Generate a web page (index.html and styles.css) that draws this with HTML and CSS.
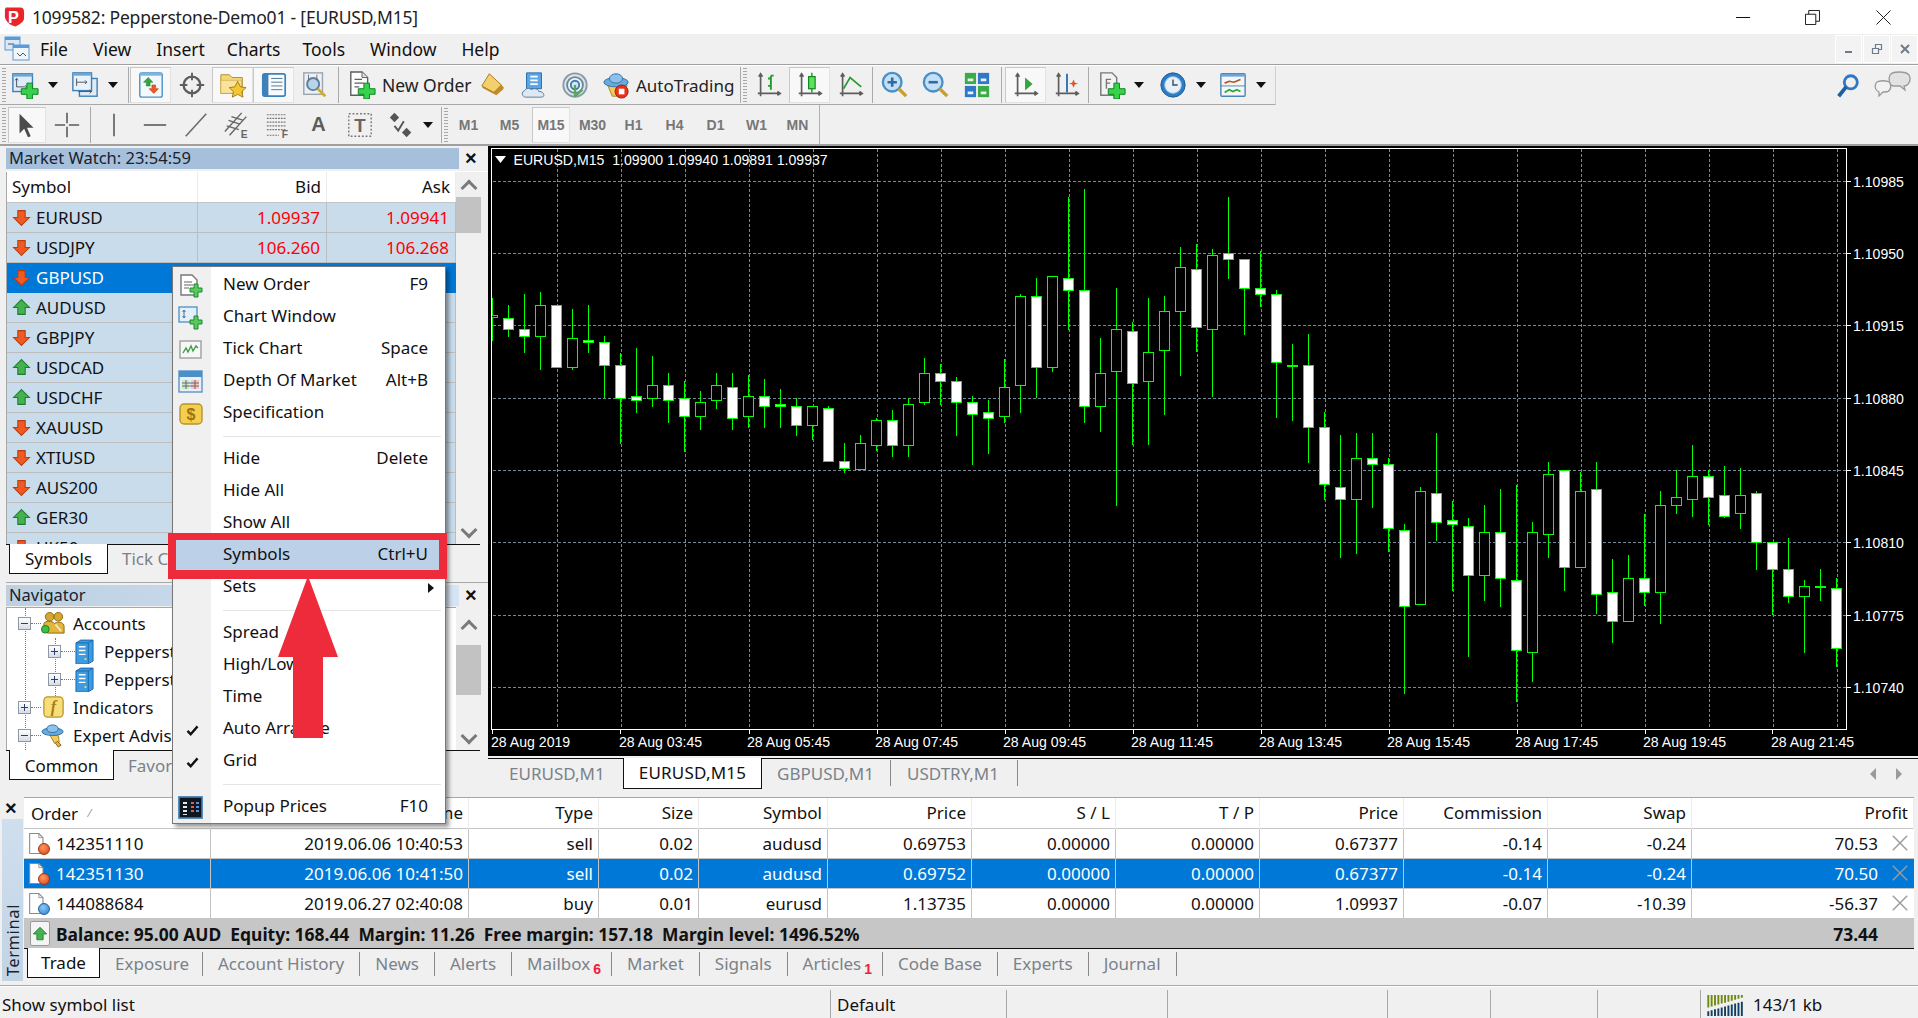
FILE: index.html
```html
<!DOCTYPE html>
<html lang="en">
<head>
<meta charset="utf-8">
<title>1099582: Pepperstone-Demo01 - [EURUSD,M15]</title>
<link rel="stylesheet" href="styles.css">
</head>
<body>
<svg class="sprite" aria-hidden="true"><defs>
<symbol id="plus" viewBox="0 0 30 30"><path d="M17 13h6v6h6v6h-6v5h-6v-5h-6v-6h6z" fill="#35d24a" stroke="#0b7f21"/></symbol>
<symbol id="up" viewBox="0 0 18 18"><path d="M9 1.500 16.500 9H12.500v6.500h-7V9H1.500z" fill="#45b14f" stroke="#1f7d33"/></symbol>
<symbol id="down" viewBox="0 0 18 18"><path d="M9 16.500 16.500 9H12.500V2.500h-7V9H1.500z" fill="#ef5a22" stroke="#b63c12"/></symbol>
<symbol id="newchart" viewBox="0 0 30 30"><rect x="2" y="3" width="21" height="19" fill="#dfecf7" stroke="#3f7fb5" stroke-width="1.500"/><rect x="2" y="3" width="21" height="3" fill="#6ba5d6"/><path d="M6 8v9h9M4.500 10 6 8l1.500 2M15 15.500l2 1.500-2 1.500" stroke="#44525e" fill="none"/><use href="#plus"/></symbol>
<symbol id="profiles" viewBox="0 0 30 30"><rect x="9" y="8" width="19" height="19" fill="#dfecf7" stroke="#3f7fb5" stroke-width="1.500"/><rect x="2" y="2" width="20" height="19" fill="#e9f2fa" stroke="#3f7fb5" stroke-width="1.500"/><rect x="2" y="2" width="20" height="3" fill="#6ba5d6"/><path d="M6 8v8M6 12h11M15 10l2 2-2 2M8 22h14M20 20l2 2-2 2" stroke="#44525e" fill="none"/></symbol>
<symbol id="mw" viewBox="0 0 30 30"><rect x="3" y="2" width="24" height="26" rx="2" fill="#f3f8fc" stroke="#4a90c8" stroke-width="1.500"/><rect x="3" y="2" width="24" height="3" fill="#7eb3dd"/><path d="M12 7l5 5h-3v4h-4v-4H7z" fill="#2fa83e" stroke="#1c7c2c" stroke-width=".6"/><path d="M18 24l5-5h-3v-4h-4v4h-3z" fill="#ef5a22" stroke="#b63c12" stroke-width=".6"/></symbol>
<symbol id="target" viewBox="0 0 30 30"><circle cx="15" cy="15" r="9" fill="none" stroke="#5d5d5d" stroke-width="2.500"/><path d="M15 2v8M15 20v8M2 15h8M20 15h8" stroke="#5d5d5d" stroke-width="2"/></symbol>
<symbol id="navstar" viewBox="0 0 30 30"><path d="M2 4h9l3 3h11v17H2z" fill="#f5d778" stroke="#b08a2e"/><path d="M2 10h22v14H2z" fill="#f9e39a" stroke="#c39f3d" stroke-width=".6"/><path d="M20 11l3 6 6 .8-4.500 4.200 1.200 6-5.700-3-5.700 3 1.200-6L11 17.800l6-.8z" fill="#f4c630" stroke="#9a7a1b"/></symbol>
<symbol id="term" viewBox="0 0 30 30"><rect x="3" y="3" width="24" height="24" rx="2" fill="#f7fbfe" stroke="#3b82bd" stroke-width="1.800"/><rect x="3" y="3" width="6" height="24" fill="#3b82bd"/><path d="M12 8h12M12 12h12M12 16h12M12 20h12" stroke="#52708c"/><path d="M6 8v1M6 12v1M6 16v1" stroke="#f0503a" stroke-width="1.500"/></symbol>
<symbol id="tester" viewBox="0 0 30 30"><rect x="3" y="2" width="20" height="23" fill="#edf1f5" stroke="#9aa5ae" stroke-width="1.500"/><circle cx="13" cy="14" r="6.500" fill="#b8d3e8" stroke="#5b7f9c" stroke-width="2"/><path d="M18 19l8 8" stroke="#d3a92e" stroke-width="3"/><path d="M8 4v6M17 4v6" stroke="#667"/></symbol>
<symbol id="doc" viewBox="0 0 30 30"><path d="M3 1h12l6 6v19H3z" fill="#fff" stroke="#5f5f5f" stroke-width="1.500"/><path d="M7 9h8M7 13h10M7 17h5" stroke="#5f5f5f" stroke-width="1.500"/><path d="M15 1v6h6" fill="#ddd" stroke="#5f5f5f"/><use href="#plus"/></symbol>
<symbol id="book" viewBox="0 0 30 30"><path d="M11 3 26 17c1 1 .5 2-.5 3l-7 6-15-8z" fill="#c18a2a"/><path d="M11 3 24 15l-8 8-13-7z" fill="#f3cf6d" stroke="#a87a22"/></symbol>
<symbol id="cloud" viewBox="0 0 30 30"><path d="M7 2h16v17H7z" fill="#5ba6e6" stroke="#2169ae"/><path d="M11 6h8M11 10h8M11 14h8" stroke="#fff" stroke-width="2"/><path d="M6 28c-4 0-5-6-1-7 1-3 6-3 7-1 3-2 8-1 8 2 5-1 8 6 3 6z" fill="#dfe8f2" stroke="#56789b"/></symbol>
<symbol id="signal" viewBox="0 0 30 30"><circle cx="15" cy="15" r="12.500" fill="#dde5ea" stroke="#8a9aa5" stroke-width="2"/><circle cx="15" cy="15" r="8.500" fill="#f1f5f7" stroke="#6b87a0" stroke-width="2"/><circle cx="15" cy="15" r="4.500" fill="#d7e4ec" stroke="#3a7ea8" stroke-width="2"/><path d="M15 15v13M15 27l8-7" stroke="#58a65a" stroke-width="2.500"/></symbol>
<symbol id="auto" viewBox="0 0 30 30"><path d="M6 15l5 12h12l4-12z" fill="#f2cb58" stroke="#a3802b"/><ellipse cx="15" cy="12" rx="13" ry="5" fill="#6aa9dc" stroke="#2f6fa8"/><ellipse cx="15" cy="8" rx="7" ry="5" fill="#8bc1ea" stroke="#2f6fa8"/><circle cx="21" cy="22" r="7" fill="#e8331f" stroke="#9a1d10"/><rect x="18" y="19" width="6" height="6" fill="#fff"/></symbol>
<symbol id="axes" viewBox="0 0 30 30"><path d="M6 3v24M3 24h24M4 6l2-3 2 3M24 22l3 2-3 2" stroke="#5d5d5d" stroke-width="1.800" fill="none"/></symbol>
<symbol id="bars" viewBox="0 0 30 30"><use href="#axes"/><path d="M17 5v15M14 8h3M17 16h-3M20 5h-3" stroke="#1f9a2b" stroke-width="2" fill="none"/></symbol>
<symbol id="candle" viewBox="0 0 30 30"><use href="#axes"/><path d="M17 2v21" stroke="#109a22" stroke-width="1.500"/><rect x="13.500" y="6" width="7" height="13" fill="#5fe05c" stroke="#0f8a20" stroke-width="1.300"/></symbol>
<symbol id="lineic" viewBox="0 0 30 30"><use href="#axes"/><path d="M7 19 14 7l12 10" stroke="#2a9a35" stroke-width="1.800" fill="none"/></symbol>
<symbol id="zin" viewBox="0 0 30 30"><circle cx="12" cy="12" r="10" fill="#c5e0f5" stroke="#4a8fc7" stroke-width="2.500"/><path d="M7 12h10M12 7v10" stroke="#2b6ea6" stroke-width="2.800"/><path d="M19 19l8 8" stroke="#c99f2c" stroke-width="3.500"/></symbol>
<symbol id="zout" viewBox="0 0 30 30"><circle cx="12" cy="12" r="10" fill="#c5e0f5" stroke="#4a8fc7" stroke-width="2.500"/><path d="M7 12h10" stroke="#2b6ea6" stroke-width="2.800"/><path d="M19 19l8 8" stroke="#c99f2c" stroke-width="3.500"/></symbol>
<symbol id="tile" viewBox="0 0 30 30"><rect x="2" y="2" width="12" height="12" fill="#3bab45"/><rect x="16" y="2" width="12" height="12" fill="#2d78c8"/><rect x="2" y="16" width="12" height="12" fill="#2d78c8"/><rect x="16" y="16" width="12" height="12" fill="#3bab45"/><path d="M5 8h6v3H5zM19 8h6v3h-6zM5 22h6v3H5zM19 22h6v3h-6z" fill="#e8f0f5"/></symbol>
<symbol id="scrollic" viewBox="0 0 30 30"><use href="#axes"/><path d="M14 7l8 7-8 7z" fill="#32a53c"/></symbol>
<symbol id="shiftic" viewBox="0 0 30 30"><use href="#axes"/><path d="M15 3v20" stroke="#2a6fb0" stroke-width="2"/><path d="M22 9l1.500 3.500 3.500 1-3.500 1L22 18l-1.500-3.500-3.500-1 3.500-1z" fill="#e0562a"/></symbol>
<symbol id="indic" viewBox="0 0 30 30"><path d="M3 2h12l5 5v19H3z" fill="#f3f3f3" stroke="#777" stroke-width="1.500"/><path d="M9 19V9h5M9 13h4" stroke="#777" stroke-width="1.500" fill="none"/><use href="#plus"/></symbol>
<symbol id="clock" viewBox="0 0 30 30"><circle cx="15" cy="15" r="13" fill="#2b7dc8" stroke="#1b578f"/><circle cx="15" cy="15" r="9" fill="#e6f0f8" stroke="#8fb6d8"/><path d="M15 9v6h5" stroke="#3b4c5c" stroke-width="1.500" fill="none"/></symbol>
<symbol id="tmpl" viewBox="0 0 30 30"><rect x="2" y="3" width="26" height="24" rx="1" fill="#f3f7fa" stroke="#4a84b3" stroke-width="1.500"/><rect x="2" y="3" width="26" height="3" fill="#6ba5d6"/><path d="M2 16h26" stroke="#4a84b3"/><path d="M6 13l5-2 5 1 7-3" stroke="#b9531e" stroke-width="1.800" fill="none"/><path d="M6 23l5-3 4 2 4-2 4 2" stroke="#32a53c" stroke-width="1.800" fill="none"/></symbol>
<symbol id="finder" viewBox="0 0 30 30"><circle cx="18" cy="11" r="7" fill="none" stroke="#2f78c4" stroke-width="3"/><path d="M13 16 5 26" stroke="#1f5ea3" stroke-width="4"/></symbol>
<symbol id="chat" viewBox="0 0 40 30"><path d="M18 4c2-4 16-4 19 0 3 5-1 11-5 11l1 4-5-4H22c-5 0-6-7-4-11z" fill="#e2e2e2" stroke="#9a9a9a" stroke-width="1.300"/><path d="M4 12c2-3 12-3 14 0 2 5 0 9-5 9H11l-4 4v-4c-3-1-5-5-3-9z" fill="#f2f2f2" stroke="#9a9a9a" stroke-width="1.300"/></symbol>
<symbol id="cursor" viewBox="0 0 30 30"><path d="M7 3v21l5-5 4 9 3-1-4-9h7z" fill="#4b4b4b"/></symbol>
<symbol id="xhair" viewBox="0 0 30 30"><path d="M15 2v11M15 17v11M2 15h11M17 15h11" stroke="#5a5a5a" stroke-width="1.700"/></symbol>
<symbol id="vline" viewBox="0 0 30 30"><path d="M15 3v24" stroke="#5a5a5a" stroke-width="1.700"/></symbol>
<symbol id="hline" viewBox="0 0 30 30"><path d="M3 15h24" stroke="#5a5a5a" stroke-width="1.700"/></symbol>
<symbol id="trend" viewBox="0 0 30 30"><path d="M4 27 26 3" stroke="#6a6a6a" stroke-width="1.700"/></symbol>
<symbol id="channel" viewBox="0 0 30 30"><path d="M2 22 20 2M7 26 25 6M6 10l12 4M4 16l13 4M9 6l13 4" stroke="#666" stroke-width="1.500" fill="none"/><text x="19" y="29" class="mini">E</text></symbol>
<symbol id="fibo" viewBox="0 0 30 30"><path d="M3 4h21M3 8h21M3 12h21M3 16h21M3 20h21M3 26h13" stroke="#777" stroke-dasharray="2 1" stroke-width="1.300"/><text x="19" y="29" class="mini">F</text></symbol>
<symbol id="textbox" viewBox="0 0 30 30"><rect x="3" y="3" width="24" height="24" fill="none" stroke="#777" stroke-dasharray="2 2" stroke-width="1.500"/><text x="15" y="23" class="tbox">T</text></symbol>
<symbol id="shapes" viewBox="0 0 30 30"><path d="M8 2l5 5-5 5-5-5zM21 18l5 5-5 5-5-5z" fill="#555"/><path d="M8 16l4 5 6-10" stroke="#555" stroke-width="2" fill="none"/></symbol>
<symbol id="ordsmall" viewBox="0 0 26 26"><path d="M3 2h11l5 5v15H3z" fill="#fff" stroke="#777" stroke-width="1.400"/><path d="M6 9h8M6 12h9M6 15h5" stroke="#666" stroke-width="1.200"/><path d="M16 11h4v4h4v4h-4v5h-4v-5h-4v-4h4z" fill="#58c85f" stroke="#1d8a2d"/></symbol>
<symbol id="chartsmall" viewBox="0 0 26 26"><rect x="1" y="2" width="18" height="15" fill="#e3eff9" stroke="#4a8fc7" stroke-width="1.300"/><path d="M6 5v8M4.500 7 6 5l1.500 2M4.500 11 6 13l1.500-2" stroke="#4a6f93" fill="none"/><path d="M16 11h4v4h4v4h-4v5h-4v-5h-4v-4h4z" fill="#58c85f" stroke="#1d8a2d"/></symbol>
<symbol id="ticksmall" viewBox="0 0 26 26"><rect x="2" y="4" width="21" height="17" fill="#f7f7f7" stroke="#999" stroke-width="1.300"/><path d="M5 16l3-5 2 4 3-6 2 5 3-5 2 2" stroke="#3f9e47" stroke-width="1.400" fill="none"/></symbol>
<symbol id="domsmall" viewBox="0 0 26 26"><rect x="1" y="2" width="23" height="21" fill="#e8eff5" stroke="#4a8fc7" stroke-width="1.300"/><rect x="1" y="2" width="23" height="6" fill="#4a8fc7"/><path d="M4 11h7v9H4z" fill="#cfe8c8"/><path d="M13 11h8v9h-8z" fill="#f4c9c2"/><path d="M4 14h17M4 17h17M8 11v9M17 11v9" stroke="#667"/></symbol>
<symbol id="specsmall" viewBox="0 0 26 26"><rect x="2" y="3" width="22" height="20" rx="4" fill="#f4ce4f" stroke="#b8932a" stroke-width="1.400"/><text x="13" y="19" class="dollar">$</text></symbol>
<symbol id="popup" viewBox="0 0 26 26"><rect x="1" y="2" width="23" height="21" fill="#0e1620" stroke="#3c7bb2" stroke-width="1.700"/><path d="M5 7h4v2H5zM5 11h4v2H5zM5 15h4v2H5zM5 19h4v1H5z" fill="#e8e8e8"/><path d="M13 7h3v2h-3zM13 11h3v2h-3zM13 15h3v2h-3z" fill="#e9594f"/><path d="M18 7h3v2h-3zM18 11h3v2h-3zM18 15h3v2h-3z" fill="#5c8fe0"/></symbol>
<symbol id="accounts" viewBox="0 0 26 26"><circle cx="9" cy="6" r="4.500" fill="#d6a72c" stroke="#8a6a17"/><circle cx="18" cy="6" r="4.500" fill="#d6a72c" stroke="#8a6a17"/><path d="M3 21V13c1-3 9-3 11 0l2-1c3-1 8 0 8 4v7H7z" fill="#e3b53a" stroke="#8a6a17"/><circle cx="4.500" cy="19" r="4" fill="#3bc045" stroke="#1c7c2c"/><path d="M15 14l6 7" stroke="#f5e6b4" stroke-width="2"/></symbol>
<symbol id="server" viewBox="0 0 20 26"><path d="M1 4l5-3h13v22l-5 3H1z" fill="#3b9be3" stroke="#1b67ac"/><path d="M14 26V4l5-3M1 4h13" stroke="#1b67ac" fill="none"/><path d="M4 8h7M4 12h7M4 16h7" stroke="#fff" stroke-width="1.500"/><circle cx="11" cy="21" r="1.200" fill="#ffd24d"/></symbol>
<symbol id="indicators" viewBox="0 0 26 26"><rect x="3" y="2" width="20" height="21" rx="4" fill="#f7de78" stroke="#b8932a" stroke-width="1.300"/><text x="13" y="18" class="func">f</text></symbol>
<symbol id="expert" viewBox="0 0 26 26"><path d="M9 12l5 9 5-1-1-7z" fill="#f0cc5a" stroke="#a3802b"/><path d="M17 19l4 4-3 2-3-4z" fill="#e3b53a" stroke="#8a6a17"/><ellipse cx="12" cy="9" rx="11" ry="4" fill="#6aa9dc" stroke="#2f6fa8"/><ellipse cx="12" cy="6" rx="6" ry="4" fill="#8bc1ea" stroke="#2f6fa8"/></symbol>
<symbol id="ticket" viewBox="0 0 24 26"><path d="M2 1h11l5 5v19H2z" fill="#fff" stroke="#8a8a8a" stroke-width="1.300"/><path d="M13 1v5h5" fill="none" stroke="#8a8a8a"/></symbol>
<symbol id="closex" viewBox="0 0 20 20"><path d="M2 2l16 16M18 2 2 18" stroke="#9b9b9b" stroke-width="1.600"/></symbol>
</defs></svg>

<div class="app">
  <header class="titlebar">
    <svg class="logo" viewBox="0 0 24 24"><path d="M3 2h15c3 0 4 2 4 5v6c0 4-5 7-9 9-5-1-10-5-11-10V4z" fill="#e8262a"/><text x="11" y="18" class="logo-p">P</text></svg>
    <span class="window-title">1099582: Pepperstone-Demo01 - [EURUSD,M15]</span>
    <div class="winctl">
      <svg class="wc wc-min" viewBox="0 0 16 16"><path d="M0 8h15" stroke="#111" stroke-width="1.100"/></svg>
      <svg class="wc wc-res" viewBox="0 0 16 16"><path d="M.5 4.500h11v11H.5zM4 4.500V.5h11.500V12H11.500" fill="none" stroke="#111"/></svg>
      <svg class="wc wc-cls" viewBox="0 0 16 16"><path d="M.5.5l15 15M15.500.5l-15 15" stroke="#111"/></svg>
    </div>
  </header>

  <nav class="menubar">
    <svg class="mdi-icon" viewBox="0 0 26 26"><rect x="1" y="1" width="15" height="13" fill="#d8e8f7" stroke="#5b9bd5"/><rect x="1" y="1" width="15" height="3" fill="#5b9bd5"/><rect x="9" y="9" width="16" height="15" fill="#eef5fb" stroke="#5b9bd5"/><rect x="9" y="9" width="16" height="3" fill="#5b9bd5"/><path d="M4 8h6M13 17l3 3 3-3 3 3" stroke="#555" fill="none"/></svg>
    <span class="menu-file">File</span><span class="menu-view">View</span><span class="menu-insert">Insert</span><span class="menu-charts">Charts</span><span class="menu-tools">Tools</span><span class="menu-window">Window</span><span class="menu-help">Help</span>
    <div class="mdi-btns">
      <span class="mdi-btn"><svg viewBox="0 0 12 12"><path d="M2 9h7" stroke="#6b7b8c" stroke-width="2"/></svg></span>
      <span class="mdi-btn"><svg viewBox="0 0 12 12"><path d="M1.500 5.500h6v5h-6zM4.500 5V1.500h6v5H8" fill="none" stroke="#6b7b8c" stroke-width="1.200"/></svg></span>
      <span class="mdi-btn"><svg viewBox="0 0 12 12"><path d="M2 2l8 8M10 2l-8 8" stroke="#6b7b8c" stroke-width="2"/></svg></span>
    </div>
  </nav>

  <div class="toolbar-row">
    <div class="toolbar tb-main">
      <i class="grip"></i>
      <span class="tool w38"><svg class="ic"><use href="#newchart"/></svg></span><span class="caret ml2"></span>
      <span class="tool w38 ml6"><svg class="ic"><use href="#profiles"/></svg></span><span class="caret ml2"></span>
      <i class="sep ml8 mr1"></i>
      <span class="tool on"><svg class="ic"><use href="#mw"/></svg></span>
      <span class="tool"><svg class="ic"><use href="#target"/></svg></span>
      <span class="tool on"><svg class="ic"><use href="#navstar"/></svg></span>
      <span class="tool on"><svg class="ic"><use href="#term"/></svg></span>
      <span class="tool"><svg class="ic"><use href="#tester"/></svg></span>
      <i class="sep ml3"></i>
      <span class="tool-text order-btn"><svg class="ic"><use href="#doc"/></svg><span>New Order</span></span>
      <span class="tool"><svg class="ic"><use href="#book"/></svg></span>
      <span class="tool"><svg class="ic"><use href="#cloud"/></svg></span>
      <span class="tool"><svg class="ic"><use href="#signal"/></svg></span>
      <span class="tool-text auto-btn"><svg class="ic"><use href="#auto"/></svg><span>AutoTrading</span></span>
      <i class="sep ml2"></i>
      <i class="grip ml2"></i>
      <span class="tool ml1"><svg class="ic"><use href="#bars"/></svg></span>
      <span class="tool on"><svg class="ic"><use href="#candle"/></svg></span>
      <span class="tool"><svg class="ic"><use href="#lineic"/></svg></span>
      <i class="sep ml1 mr1"></i>
      <span class="tool"><svg class="ic"><use href="#zin"/></svg></span>
      <span class="tool"><svg class="ic"><use href="#zout"/></svg></span>
      <span class="tool"><svg class="ic"><use href="#tile"/></svg></span>
      <i class="sep ml4 mr3"></i>
      <span class="tool on"><svg class="ic"><use href="#scrollic"/></svg></span>
      <span class="tool"><svg class="ic"><use href="#shiftic"/></svg></span>
      <i class="sep ml1 mr2"></i>
      <span class="tool"><svg class="ic"><use href="#indic"/></svg></span><span class="caret"></span>
      <span class="tool ml6"><svg class="ic"><use href="#clock"/></svg></span><span class="caret ml1"></span>
      <span class="tool ml4"><svg class="ic"><use href="#tmpl"/></svg></span><span class="caret ml1"></span>
    </div>
    <div class="tb-right">
      <svg class="ic"><use href="#finder"/></svg>
      <svg class="ic-chat"><use href="#chat"/></svg>
    </div>
  </div>

  <div class="toolbar-row tb2-row">
    <div class="toolbar tb-draw">
      <i class="grip"></i>
      <span class="tool w38 on ml2"><svg class="ic"><use href="#cursor"/></svg></span>
      <span class="tool w38 ml2"><svg class="ic"><use href="#xhair"/></svg></span>
      <i class="sep ml4 mr2"></i>
      <span class="tool"><svg class="ic"><use href="#vline"/></svg></span>
      <span class="tool"><svg class="ic"><use href="#hline"/></svg></span>
      <span class="tool"><svg class="ic"><use href="#trend"/></svg></span>
      <span class="tool"><svg class="ic"><use href="#channel"/></svg></span>
      <span class="tool"><svg class="ic"><use href="#fibo"/></svg></span>
      <span class="tool glyph-a">A</span>
      <span class="tool"><svg class="ic"><use href="#textbox"/></svg></span>
      <span class="tool"><svg class="ic"><use href="#shapes"/></svg></span><span class="caret"></span>
      <i class="sep ml6 mr2"></i>
      <i class="grip"></i>
      <span class="tool period">M1</span>
      <span class="tool period">M5</span>
      <span class="tool w38 period on ml2">M15</span>
      <span class="tool period ml2">M30</span>
      <span class="tool period">H1</span>
      <span class="tool period">H4</span>
      <span class="tool period">D1</span>
      <span class="tool period">W1</span>
      <span class="tool period">MN</span>
    </div>
  </div>

  <main class="workspace">
    <aside class="sidebar">
      <section class="panel panel-mw">
        <div class="panel-title title-active"><span>Market Watch: 23:54:59</span><b class="panel-x">×</b></div>
        <div class="panel-body">
          <div class="table-wrap">
            <div class="mw-head"><span class="l">Symbol</span><span>Bid</span><span>Ask</span></div>
            <div class="mw-row"><span class="l"><svg class="ic-arrow"><use href="#down"/></svg>EURUSD</span><span class="red">1.09937</span><span class="red">1.09941</span></div>
            <div class="mw-row"><span class="l"><svg class="ic-arrow"><use href="#down"/></svg>USDJPY</span><span class="red">106.260</span><span class="red">106.268</span></div>
            <div class="mw-row sel"><span class="l"><svg class="ic-arrow"><use href="#down"/></svg>GBPUSD</span><span></span><span></span></div>
            <div class="mw-row"><span class="l"><svg class="ic-arrow"><use href="#up"/></svg>AUDUSD</span><span></span><span></span></div>
            <div class="mw-row"><span class="l"><svg class="ic-arrow"><use href="#down"/></svg>GBPJPY</span><span></span><span></span></div>
            <div class="mw-row"><span class="l"><svg class="ic-arrow"><use href="#up"/></svg>USDCAD</span><span></span><span></span></div>
            <div class="mw-row"><span class="l"><svg class="ic-arrow"><use href="#up"/></svg>USDCHF</span><span></span><span></span></div>
            <div class="mw-row"><span class="l"><svg class="ic-arrow"><use href="#down"/></svg>XAUUSD</span><span></span><span></span></div>
            <div class="mw-row"><span class="l"><svg class="ic-arrow"><use href="#down"/></svg>XTIUSD</span><span></span><span></span></div>
            <div class="mw-row"><span class="l"><svg class="ic-arrow"><use href="#down"/></svg>AUS200</span><span></span><span></span></div>
            <div class="mw-row"><span class="l"><svg class="ic-arrow"><use href="#up"/></svg>GER30</span><span></span><span></span></div>
            <div class="mw-row"><span class="l"><svg class="ic-arrow"><use href="#down"/></svg>HK50</span><span></span><span></span></div>
          </div>
          <div class="scrollbar sb-mw"><i class="chev up"></i><i class="thumb"></i><i class="chev dn"></i></div>
        </div>
        <div class="side-tabs"><span class="side-tab active">Symbols</span><span class="side-tab">Tick Chart</span></div>
      </section>
      <section class="panel panel-nav">
        <div class="panel-title title-idle"><span>Navigator</span><b class="panel-x">×</b></div>
        <div class="panel-body nav-body">
          <div class="tree">
            <div class="node"><i class="exp minus"></i><i class="dots d1"></i><svg class="ic-node"><use href="#accounts"/></svg><span>Accounts</span></div>
            <div class="node lv2"><i class="exp plus"></i><i class="dots d2"></i><svg class="ic-server"><use href="#server"/></svg><span>Pepperstone-Demo01</span></div>
            <div class="node lv2"><i class="exp plus"></i><i class="dots d2"></i><svg class="ic-server"><use href="#server"/></svg><span>Pepperstone-Demo02</span></div>
            <div class="node"><i class="exp plus"></i><i class="dots d1"></i><svg class="ic-node"><use href="#indicators"/></svg><span>Indicators</span></div>
            <div class="node"><i class="exp minus"></i><i class="dots d1"></i><svg class="ic-node"><use href="#expert"/></svg><span>Expert Advisors</span></div>
          </div>
          <div class="scrollbar sb-nav"><i class="chev up"></i><i class="thumb"></i><i class="chev dn"></i></div>
        </div>
        <div class="side-tabs nav-tabs"><span class="side-tab active common">Common</span><span class="side-tab fav">Favorites</span></div>
      </section>
    </aside>

    <section class="chart-area">
      <svg class="chart" viewBox="488 146 1430 610" width="1430" height="610">
        <defs><clipPath id="plot"><rect x="492" y="149" width="1354" height="580"/></clipPath></defs>
        <path class="grid" d="M493 181.500H1846M493 253.500H1846M493 325.500H1846M493 398.500H1846M493 470.500H1846M493 542.500H1846M493 615.500H1846M493 687.500H1846"/>
        <path class="grid" d="M557.500 149V729M621.500 149V729M685.500 149V729M749.500 149V729M813.500 149V729M877.500 149V729M941.500 149V729M1005.500 149V729M1069.500 149V729M1133.500 149V729M1197.500 149V729M1261.500 149V729M1325.500 149V729M1389.500 149V729M1453.500 149V729M1517.500 149V729M1581.500 149V729M1645.500 149V729M1709.500 149V729M1773.500 149V729M1837.500 149V729"/>
        <g id="candles" clip-path="url(#plot)"></g>
        <rect class="frame" x="491.500" y="148.500" width="1355" height="581"/>
        <path class="tick" d="M492.500 730v4M620.500 730v4M749.500 730v4M877.500 730v4M1005.500 730v4M1133.500 730v4M1261.500 730v4M1389.500 730v4M1517.500 730v4M1645.500 730v4M1772.500 730v4M1847 181.500h4M1847 253.500h4M1847 325.500h4M1847 398.500h4M1847 470.500h4M1847 542.500h4M1847 615.500h4M1847 687.500h4"/>
        <path class="legend-tri" d="M495 156h11l-5.500 7z"/>
        <text class="cht" x="513.500" y="165">EURUSD,M15  1.09900 1.09940 1.09891 1.09937</text>
        <text class="cht" x="1853" y="187">1.10985</text>
        <text class="cht" x="1853" y="259">1.10950</text>
        <text class="cht" x="1853" y="331">1.10915</text>
        <text class="cht" x="1853" y="404">1.10880</text>
        <text class="cht" x="1853" y="476">1.10845</text>
        <text class="cht" x="1853" y="548">1.10810</text>
        <text class="cht" x="1853" y="621">1.10775</text>
        <text class="cht" x="1853" y="693">1.10740</text>
        <text class="cht" x="491" y="747">28 Aug 2019</text>
        <text class="cht" x="619" y="747">28 Aug 03:45</text>
        <text class="cht" x="747" y="747">28 Aug 05:45</text>
        <text class="cht" x="875" y="747">28 Aug 07:45</text>
        <text class="cht" x="1003" y="747">28 Aug 09:45</text>
        <text class="cht" x="1131" y="747">28 Aug 11:45</text>
        <text class="cht" x="1259" y="747">28 Aug 13:45</text>
        <text class="cht" x="1387" y="747">28 Aug 15:45</text>
        <text class="cht" x="1515" y="747">28 Aug 17:45</text>
        <text class="cht" x="1643" y="747">28 Aug 19:45</text>
        <text class="cht" x="1771" y="747">28 Aug 21:45</text>
      </svg>
      <div class="chart-tabs">
        <span class="ctab">EURUSD,M1</span>
        <span class="ctab active">EURUSD,M15</span>
        <span class="ctab bar">GBPUSD,M1</span>
        <span class="ctab bar">USDTRY,M1</span>
        <span class="ctab-scroll"><i class="tri-l"></i><i class="tri-r"></i></span>
      </div>
    </section>
  </main>

  <section class="terminal">
    <div class="term-side">
      <b class="panel-x term-x">×</b>
      <div class="term-label"><span>Terminal</span></div>
    </div>
    <div class="term-main">
      <div class="t-row t-head"><span class="l">Order<i class="sort">⁄</i></span><span>Time</span><span>Type</span><span>Size</span><span>Symbol</span><span>Price</span><span>S / L</span><span>T / P</span><span>Price</span><span>Commission</span><span>Swap</span><span>Profit</span></div>
      <div class="t-row"><span class="l ord"><svg class="ic-ticket"><use href="#ticket"/></svg><i class="dot sell"></i>142351110</span><span>2019.06.06 10:40:53</span><span>sell</span><span>0.02</span><span>audusd</span><span>0.69753</span><span>0.00000</span><span>0.00000</span><span>0.67377</span><span>-0.14</span><span>-0.24</span><span class="profit">70.53<svg class="ic-x"><use href="#closex"/></svg></span></div>
      <div class="t-row sel"><span class="l ord"><svg class="ic-ticket"><use href="#ticket"/></svg><i class="dot sell"></i>142351130</span><span>2019.06.06 10:41:50</span><span>sell</span><span>0.02</span><span>audusd</span><span>0.69752</span><span>0.00000</span><span>0.00000</span><span>0.67377</span><span>-0.14</span><span>-0.24</span><span class="profit">70.50<svg class="ic-x"><use href="#closex"/></svg></span></div>
      <div class="t-row"><span class="l ord"><svg class="ic-ticket"><use href="#ticket"/></svg><i class="dot buy"></i>144088684</span><span>2019.06.27 02:40:08</span><span>buy</span><span>0.01</span><span>eurusd</span><span>1.13735</span><span>0.00000</span><span>0.00000</span><span>1.09937</span><span>-0.07</span><span>-10.39</span><span class="profit">-56.37<svg class="ic-x"><use href="#closex"/></svg></span></div>
      <div class="balance">
        <span class="bal-ic"><svg class="ic-bal"><use href="#up"/></svg></span>
        <span class="bal-text">Balance: 95.00 AUD  Equity: 168.44  Margin: 11.26  Free margin: 157.18  Margin level: 1496.52%</span>
        <span class="bal-total">73.44</span>
      </div>
      <div class="term-tabs">
        <span class="ttab active">Trade</span><span class="ttab first">Exposure</span><span class="ttab">Account History</span><span class="ttab">News</span><span class="ttab">Alerts</span><span class="ttab">Mailbox<sub class="badge">6</sub></span><span class="ttab">Market</span><span class="ttab">Signals</span><span class="ttab">Articles<sub class="badge">1</sub></span><span class="ttab">Code Base</span><span class="ttab">Experts</span><span class="ttab">Journal</span>
      </div>
    </div>
  </section>

  <footer class="statusbar">
    <span class="st st-a">Show symbol list</span>
    <span class="st st-b">Default</span>
    <span class="st st-c"></span>
    <span class="st st-d"></span>
    <span class="st st-e"></span>
    <span class="st st-f"></span>
    <span class="st st-g"></span>
    <span class="st st-h">
      <svg class="ic-conn" viewBox="0 0 40 24"><path d="M1 1v13M4.500 1v12M8 1v11M11.500 1v10M15 1v9M18.500 1v8M22 1v7M25.500 1v6M29 1v5M32.500 1v4M36 1v3" stroke="#6f8a10" stroke-width="2"/><path d="M1 18v5M4.500 17v6M8 16v7M11.500 15v8M15 14v9M18.500 13v10M22 12v11M25.500 11v12M29 10v13M32.500 9v14M36 8v15" stroke="#123f63" stroke-width="2"/></svg>
      143/1 kb
    </span>
  </footer>

  <div class="context-menu">
    <div class="mi"><svg class="ic-mi"><use href="#ordsmall"/></svg><span>New Order</span><span>F9</span></div>
    <div class="mi"><svg class="ic-mi"><use href="#chartsmall"/></svg><span>Chart Window</span><span></span></div>
    <div class="mi"><svg class="ic-mi"><use href="#ticksmall"/></svg><span>Tick Chart</span><span>Space</span></div>
    <div class="mi"><svg class="ic-mi"><use href="#domsmall"/></svg><span>Depth Of Market</span><span>Alt+B</span></div>
    <div class="mi"><svg class="ic-mi"><use href="#specsmall"/></svg><span>Specification</span><span></span></div>
    <div class="msep"></div>
    <div class="mi"><i></i><span>Hide</span><span>Delete</span></div>
    <div class="mi"><i></i><span>Hide All</span><span></span></div>
    <div class="mi"><i></i><span>Show All</span><span></span></div>
    <div class="mi hot"><i></i><span>Symbols</span><span>Ctrl+U</span></div>
    <div class="mi"><i></i><span>Sets</span><i class="sub-arrow"></i></div>
    <div class="msep"></div>
    <div class="mi"><i></i><span>Spread</span><span></span></div>
    <div class="mi"><i></i><span>High/Low</span><span></span></div>
    <div class="mi"><i></i><span>Time</span><span></span></div>
    <div class="mi"><svg class="ic-check" viewBox="0 0 14 12"><path d="M1.500 6.500 5 10l7.500-8.500" fill="none" stroke="#111" stroke-width="2.600"/></svg><span>Auto Arrange</span><span></span></div>
    <div class="mi"><svg class="ic-check" viewBox="0 0 14 12"><path d="M1.500 6.500 5 10l7.500-8.500" fill="none" stroke="#111" stroke-width="2.600"/></svg><span>Grid</span><span></span></div>
    <div class="msep"></div>
    <div class="mi"><svg class="ic-mi"><use href="#popup"/></svg><span>Popup Prices</span><span>F10</span></div>
  </div>
  <svg class="red-arrow" viewBox="0 0 60 162"><path d="M30 0 60 81H45V162H15V81H0z"/></svg>
</div>
<script src="chart.js"></script>
</body>
</html>
```

FILE: styles.css
```css
* { box-sizing: border-box; }
html, body { margin: 0; padding: 0; }
body { width: 1918px; height: 1018px; overflow: hidden; background: #f0f0f0; color: #111; font-family: "Noto Sans", "Open Sans", sans-serif; font-size: 17px; }
i { font-style: normal; display: block; }
.sprite { position: absolute; width: 0; height: 0; }
.mini { font: 700 11px "Liberation Sans", sans-serif; fill: #666; }
.tbox { font: 700 20px "Liberation Sans", sans-serif; fill: #666; text-anchor: middle; }
.dollar { font: 700 16px "Liberation Sans", sans-serif; fill: #9a7413; text-anchor: middle; }
.func { font: italic 700 17px "Liberation Serif", serif; fill: #a67c1b; text-anchor: middle; }
.logo-p { font: 700 17px "Liberation Sans", sans-serif; fill: #fff; text-anchor: middle; }

.app { position: relative; width: 1918px; height: 1018px; display: flex; flex-direction: column; }

/* title */
.titlebar { height: 34px; background: #fff; display: flex; align-items: center; padding-left: 3px; flex: none; }
.logo { width: 23px; height: 24px; margin-right: 6px; }
.window-title { font-size: 17.500px; color: #222; letter-spacing: -.2px; }
.winctl { margin-left: auto; display: flex; align-items: center; height: 34px; }
.wc { width: 15px; height: 15px; }
.wc-min { margin-right: 54px; }
.wc-res { margin-right: 56px; }
.wc-cls { margin-right: 27px; }

/* menu */
.menubar { height: 31px; flex: none; background: #f0f0f0; border-bottom: 1px solid #a0a0a0; display: flex; align-items: center; font-size: 17.500px; position: relative; }
.mdi-icon { width: 26px; height: 26px; margin-left: 4px; }
.menu-file { margin-left: 10px; }
.menu-view { margin-left: 25px; }
.menu-insert { margin-left: 25px; }
.menu-charts { margin-left: 22px; }
.menu-tools { margin-left: 22px; }
.menu-window { margin-left: 25px; }
.menu-help { margin-left: 25px; }
.mdi-btns { margin-left: auto; display: flex; gap: 1px; padding-right: 0; align-self: flex-start; margin-top: 1px; }
.mdi-btn { width: 27px; height: 28px; border: 1px solid #fff; display: flex; align-items: center; justify-content: center; background: #f3f3f3; }
.mdi-btn svg { width: 12px; height: 12px; }

/* toolbars */
.toolbar-row { height: 40px; flex: none; background: #f0f0f0; border-top: 1px solid #fff; display: flex; justify-content: space-between; }
.tb2-row { height: 41px; border-top: 0; border-bottom: 2px solid #a0a0a0; }
.toolbar { display: flex; align-items: center; padding-left: 2px; }
.tb-main { width: 1276px; border-bottom: 1px solid #a8a8a8; border-right: 1px solid #d0d0d0; }
.tb-draw { width: 820px; border-right: 1px solid #b0b0b0; }
.tool { width: 41px; height: 36px; flex: none; display: flex; align-items: center; justify-content: center; border: 1px solid transparent; }
.w38 { width: 38px; }
.tool.on { background: #f8f8f8; border-color: #c8c8c8 #e2e2e2 #e2e2e2 #c8c8c8; }
.ic { width: 28px; height: 28px; flex: none; }
.grip { width: 4px; height: 34px; flex: none; background: repeating-linear-gradient(180deg, #a8a8a8 0 1px, transparent 1px 3px); }
.sep { width: 1px; height: 36px; background: #aaa; flex: none; }
.caret { width: 14px; height: 6px; flex: none; position: relative; }
.caret::after { content: ""; position: absolute; left: 2px; top: 0; border: 5px solid transparent; border-top: 6px solid #111; border-bottom: 0; }
.ml1 { margin-left: 1px; } .ml2 { margin-left: 2px; } .ml3 { margin-left: 3px; } .ml4 { margin-left: 4px; } .ml6 { margin-left: 6px; } .ml8 { margin-left: 8px; }
.mr1 { margin-right: 1px; } .mr2 { margin-right: 2px; } .mr3 { margin-right: 3px; }
.tool-text { display: flex; align-items: center; height: 36px; font-size: 17.500px; flex: none; color: #222; white-space: nowrap; }
.order-btn { width: 133px; padding-left: 9px; gap: 6px; }
.auto-btn { width: 143px; padding-left: 7px; gap: 6px; font-size: 17px; }
.tb-right { display: flex; align-items: center; gap: 10px; padding-right: 6px; }
.ic-chat { width: 40px; height: 30px; }
.glyph-a { font: 700 20px "Liberation Sans", sans-serif; color: #5c5c5c; }
.period { font: 700 14px "Liberation Sans", sans-serif; color: #777; }

/* workspace */
.workspace { height: 644px; flex: none; display: flex; }
.sidebar { width: 488px; flex: none; padding-left: 6px; display: flex; flex-direction: column; }
.panel-mw { height: 436px; padding-top: 2px; }
.panel-nav { border-top: 1px solid #a8a8a8; margin-top: 0; padding-top: 2px; }
.panel-title { height: 21px; width: 475px; display: flex; align-items: center; padding-left: 3px; line-height: 21px; font-size: 16.500px; color: #16222e; position: relative; }
.panel-title span { margin-bottom: 3px; }
.title-active { background: #a6bfdb; }
.title-idle { background: linear-gradient(90deg, #bcd0e2, #d7e5f6); }
.title-active::after, .title-idle::after { content: ""; position: absolute; left: 453px; top: 0; bottom: 0; width: 22px; background: #f0f0f0; }
.panel-x { position: absolute; left: 459px; top: -1px; z-index: 1; font: 700 20px/22px "Liberation Sans", sans-serif; color: #111; }
.panel-body { display: flex; height: 375px; margin-top: 2px; border-top: 1px solid #fff; }
.table-wrap { width: 450px; background: #c9dcec; border-left: 1px solid #a8a8a8; overflow: hidden; height: 373px; }
.mw-head { height: 31px; background: #fff; display: grid; grid-template-columns: 191px 129px 129px; align-items: center; border-bottom: 1px solid #c4c4c4; }
.mw-head span { text-align: right; padding-right: 5px; line-height: 30px; border-right: 1px solid #ececec; height: 30px; }
.mw-head .l { text-align: left; padding-left: 5px; }
.mw-row { height: 30px; display: grid; grid-template-columns: 191px 129px 129px; border-bottom: 1px solid #bdbdbd; background: #c9dcec; }
.mw-row span { text-align: right; padding-right: 6px; line-height: 29px; border-right: 1px solid #bdbdbd; }
.mw-row .l { display: flex; align-items: center; gap: 5px; padding-left: 5px; text-align: left; }
.ic-arrow { width: 19px; height: 19px; flex: none; }
.mw-row.sel { background: #0078d7; color: #fff; border-color: #0078d7; }
.mw-row.sel span { border-color: #0078d7; }
.red { color: #ff0000; }
.scrollbar { width: 25px; position: relative; }
.chev { position: absolute; left: 5px; width: 15px; height: 15px; }
.chev::before { content: ""; position: absolute; left: 2px; top: 4px; width: 9px; height: 9px; border-left: 3px solid #7a7a7a; border-top: 3px solid #7a7a7a; transform: rotate(45deg); }
.chev.dn::before { transform: rotate(225deg); top: -1px; }
.thumb { position: absolute; left: 0; width: 25px; background: #c2c2c2; }
.sb-mw .chev.up { top: 6px; }
.sb-mw .thumb { top: 25px; height: 36px; }
.sb-mw .chev.dn { top: 353px; }
.side-tabs { height: 30px; display: flex; margin-top: -2px; border-top: 1px solid #111; width: 474px; position: relative; }
.side-tab { height: 30px; margin-top: -1px; padding: 0 14px; line-height: 29px; color: #7b8289; }
.side-tab.active { width: 99px; margin-left: 3px; background: #fff; color: #111; border: 1px solid #111; border-top: 0; border-left-width: 1px; text-align: center; padding: 0; }
.nav-body { height: 143px; margin-top: 1px; border-top: 0; }
.tree { width: 450px; background: #fff; border-left: 1px solid #a8a8a8; border-top: 1px solid #a8a8a8; padding-top: 1px; position: relative; overflow: hidden; }
.tree::before { content: ""; position: absolute; left: 18px; top: 0; bottom: 0; border-left: 1px dotted #777; }
.tree::after { content: ""; position: absolute; left: 48px; top: 30px; height: 60px; border-left: 1px dotted #777; }
.node { height: 28px; display: flex; align-items: center; padding-left: 11px; position: relative; z-index: 1; white-space: nowrap; }
.node.lv2 { padding-left: 41px; }
.exp { width: 13px; height: 13px; flex: none; border: 1px solid #8e98a4; background: linear-gradient(#fff, #d8dde3); position: relative; }
.exp::before { content: ""; position: absolute; left: 2px; right: 2px; top: 5px; height: 1px; background: #2a3f6a; }
.exp.plus::after { content: ""; position: absolute; top: 2px; bottom: 2px; left: 5px; width: 1px; background: #2a3f6a; }
.dots { height: 1px; border-top: 1px dotted #777; flex: none; }
.d1 { width: 10px; }
.d2 { width: 14px; }
.ic-node { width: 25px; height: 25px; flex: none; margin-right: 7px; }
.ic-server { width: 19px; height: 25px; flex: none; margin-right: 10px; }
.sb-nav .chev.up { top: 11px; }
.sb-nav .thumb { top: 38px; height: 50px; }
.sb-nav .chev.dn { top: 124px; }
.nav-tabs { margin-top: 0; }
.nav-tabs .side-tab { line-height: 32px; }
.side-tab.common { width: 105px; }

/* chart */
.chart-area { width: 1430px; flex: none; background: #f0f0f0; }
.chart { display: block; background: #000; }
.grid { stroke: #778899; stroke-dasharray: 3 2; fill: none; shape-rendering: crispEdges; }
.frame { fill: none; stroke: #fff; shape-rendering: crispEdges; }
.tick { stroke: #fff; fill: none; shape-rendering: crispEdges; }
.legend-tri { fill: #fff; }
.cht { font: 14.100px "Liberation Sans", sans-serif; fill: #fff; white-space: pre; }
.wick { stroke: #00ff00; shape-rendering: crispEdges; }
.body-up { fill: #000; stroke: #00ff00; shape-rendering: crispEdges; }
.body-dn { fill: #fff; stroke: #00ff00; stroke-width: 1.600; shape-rendering: crispEdges; }
.chart-tabs { height: 31px; margin-top: 2px; border-top: 1px solid #111; display: flex; color: #7b8289; position: relative; }
.ctab { height: 30px; line-height: 29px; flex: none; }
.ctab:nth-child(1) { width: 135px; padding-left: 21px; }
.ctab.active { width: 139px; background: #fff; color: #111; border: 1px solid #111; border-top: 0; text-align: center; margin-top: -1px; height: 31px; letter-spacing: .2px; }
.ctab.bar { width: 129px; padding-left: 15px; border-right: 1px solid #888; height: 26px; margin-top: 1px; line-height: 27px; }
.ctab.bar:nth-child(4) { width: 127px; padding-left: 16px; }
.ctab-scroll { position: absolute; left: 1382px; top: 9px; display: flex; gap: 20px; }
.tri-l { height: 10px; width: 6px; border-style: solid; border-color: transparent #9a9a9a transparent transparent; border-width: 6px 6px 6px 0; }
.tri-r { height: 10px; width: 6px; border-style: solid; border-color: transparent transparent transparent #9a9a9a; border-width: 6px 0 6px 6px; }

/* terminal */
.terminal { height: 195px; flex: none; display: flex; padding-top: 7px; }
.term-side { width: 24px; flex: none; position: relative; }
.term-x { left: 5px; top: 0; }
.term-label { position: absolute; left: 2px; top: 22px; width: 21px; height: 162px; background: linear-gradient(#cfdfee, #c2d3e4); display: flex; align-items: flex-end; justify-content: center; padding-bottom: 5px; }
.term-label span { writing-mode: vertical-rl; transform: rotate(180deg); font-size: 16.500px; line-height: 18px; color: #16222e; letter-spacing: .6px; }
.term-main { width: 1890px; flex: none; }
.t-row { display: grid; grid-template-columns: 187px 258px 130px 100px 129px 144px 144px 144px 144px 144px 144px 222px; height: 30px; background: #fff; border-bottom: 1px solid #c4c4c4; }
.t-row span { text-align: right; padding-right: 5px; line-height: 29px; border-right: 1px solid #c4c4c4; white-space: nowrap; }
.t-head { height: 32px; border-top: 1px solid #a8a8a8; margin-bottom: 0; }
.t-head span { border-color: #ececec; line-height: 30px; }
.t-row .l { text-align: left; padding-left: 7px; }
.sort { display: inline-block; margin-left: 11px; font-size: 11px; color: #888; vertical-align: 3px; }
.t-row .ord { position: relative; padding-left: 32px; display: block; }
.ic-ticket { position: absolute; left: 4px; top: 2px; width: 20px; height: 25px; }
.dot { position: absolute; left: 14px; top: 14px; width: 12px; height: 12px; border-radius: 50%; }
.dot.sell { background: radial-gradient(circle at 40% 35%, #ff9a5c, #d9401a); border: 1px solid #a33010; }
.dot.buy { background: radial-gradient(circle at 40% 35%, #8cc8f5, #2d7fd0); border: 1px solid #205f9e; }
.t-row.sel { background: #0078d7; color: #fff; }
.t-row .profit { padding-right: 36px; position: relative; border-right: 0; }
.ic-x { position: absolute; right: 5px; top: 5px; width: 18px; height: 18px; }
.balance { height: 30px; background: #c6c6c6; display: flex; align-items: center; font-weight: 700; font-size: 17.450px; border-bottom: 1px solid #111; }
.bal-ic { width: 20px; height: 25px; margin-left: 6px; background: #f4f4f4; border: 1px solid #9a9a9a; border-radius: 2px; display: flex; align-items: center; justify-content: center; flex: none; }
.ic-bal { width: 16px; height: 16px; }
.bal-text { margin-left: 6px; white-space: pre; }
.bal-total { margin-left: auto; padding-right: 36px; }
.term-tabs { height: 30px; display: flex; color: #7b8289; border-bottom: 0; padding-left: 3px; font-size: 17px; }
.ttab { height: 24px; margin-top: 3px; padding: 0 15px; line-height: 24px; border-right: 1px solid #888; flex: none; white-space: nowrap; }
.ttab.active { height: 30px; margin-top: -1px; width: 73px; padding: 0; text-align: center; line-height: 30px; background: #fff; color: #111; border: 1px solid #111; border-top: 0; }
.ttab.first { width: 103px; }
.badge { font: 700 14px "Liberation Sans", sans-serif; color: #f0213a; vertical-align: -4px; margin-left: 3px; margin-right: -5px; }

/* status */
.statusbar { height: 33px; flex: none; border-top: 1px solid #a8a8a8; display: flex; margin-top: 0; padding-top: 4px; box-shadow: inset 0 1px 0 #fff; }
.st { flex: none; border-left: 1px solid #a8a8a8; padding-left: 6px; padding-top: 2px; height: 28px; line-height: 26px; white-space: nowrap; display: flex; align-items: center; gap: 7px; }
.st-a { width: 830px; border-left: 0; padding-left: 2px; }
.st-b { width: 176px; }
.st-c { width: 161px; }
.st-d { width: 220px; }
.st-e { width: 103px; }
.st-f { width: 107px; }
.st-g { width: 103px; }
.st-h { width: 218px; }
.ic-conn { width: 39px; height: 23px; }

/* context menu */
.context-menu { position: absolute; left: 172px; top: 266px; width: 274px; height: 558px; padding-top: 3px; background: linear-gradient(90deg, #f0f0f0 38px, #fff 38px); border: 1px solid #777; box-shadow: 3px 3px 4px rgba(0,0,0,.4); z-index: 5; }
.mi { height: 32px; display: grid; grid-template-columns: 38px 1fr auto; align-items: center; padding-right: 17px; position: relative; }
.mi > span { padding-bottom: 5px; }
.mi > span:nth-child(2) { padding-left: 12px; }
.ic-mi { width: 26px; height: 26px; margin-left: 5px; }
.ic-check { width: 13px; height: 11px; margin-left: 13px; }
.msep { height: 14px; margin: 0 4px 0 50px; position: relative; }
.msep::after { content: ""; position: absolute; left: 0; right: 0; top: 6px; height: 1px; background: #e4e4e4; }
.sub-arrow { width: 0; height: 0; border: 5px solid transparent; border-left: 6px solid #111; border-right: 0; margin-right: -12px; }
.mi.hot { background: #bcd1e7; }
.mi.hot::after { content: ""; position: absolute; left: -5px; right: -2px; top: -7px; bottom: -7px; border: 8px solid #ee2b3b; border-top-width: 7px; border-bottom-width: 9px; }
.red-arrow { position: absolute; left: 278px; top: 576px; width: 60px; height: 162px; z-index: 6; fill: #ee2b3b; }
```

FILE: chart.js
```js
// Candle data, one row per bar: wick top, wick bottom, body top, body bottom, solid body.
// Values are in thirds of a pixel above the chart origin (y = 140 + v / 3).
var BARS = [
[475,603,526,532,0],[495,590,533,568,1],[462,638,568,589,1],[456,689,496,589,0],[496,682,496,682,1],
[507,689,595,682,0],[495,638,601,607,1],[588,775,607,676,1],[638,912,676,775,1],[624,818,769,781,1],
[648,800,736,775,0],[700,848,736,781,1],[724,935,775,829,1],[753,870,787,829,0],[700,807,736,781,0],
[700,870,742,835,1],[706,864,769,829,0],[717,864,769,799,1],[747,864,793,799,1],[775,888,799,856,1],
[799,900,799,856,0],[799,962,805,962,1],[910,998,962,985,1],[885,987,910,987,0],[835,932,841,916,0],
[811,950,841,916,1],[775,950,793,916,0],[655,795,700,787,0],[672,795,700,724,1],[712,888,724,787,1],
[769,975,787,823,1],[780,942,817,835,1],[658,848,742,829,0],[463,818,469,736,0],[415,775,469,682,1],
[408,695,409,682,0],[170,570,415,451,1],[148,848,451,799,1],[595,875,700,799,0],[445,1097,568,694,0],
[545,914,574,730,1],[475,916,637,724,0],[468,825,514,631,0],[322,707,382,514,0],[313,635,388,562,1],
[327,770,346,568,0],[172,416,340,358,1],[358,585,358,445,1],[332,500,445,463,1],[451,835,463,667,1],
[612,843,676,677,0],[582,968,676,862,1],[816,1080,862,1033,1],[885,1253,1042,1078,1],[880,1241,955,1078,0],
[880,1103,955,973,1],[955,1235,973,1165,1],[1153,1662,1171,1399,1],[1041,1393,1054,1393,0],[880,1203,1060,1147,1],
[1083,1353,1141,1153,1],[1135,1550,1159,1306,1],[1095,1383,1177,1306,0],[1048,1400,1177,1315,1],[1035,1687,1321,1531,1],
[1146,1625,1177,1537,0],[967,1253,1003,1183,0],[991,1353,991,1282,1],[997,1282,1054,1282,0],[967,1421,1048,1363,1],
[1257,1508,1357,1444,1],[1245,1444,1315,1444,0],[1123,1399,1315,1357,1],[1053,1451,1096,1357,0],[991,1121,1072,1096,0],
[915,1130,1009,1078,0],[991,1155,1009,1072,1],[978,1135,1066,1129,1],[984,1167,1066,1120,0],[1054,1289,1060,1207,1],
[1207,1426,1207,1288,1],[1194,1388,1288,1369,1],[1320,1538,1339,1369,0],[1287,1382,1339,1340,0],[1315,1580,1345,1525,1]
];
(function () {
  var NS = "http://www.w3.org/2000/svg";
  var g = document.getElementById("candles");
  function py(v) { return Math.round(140 + v / 3); }
  function add(tag, attrs) {
    var el = document.createElementNS(NS, tag);
    for (var k in attrs) el.setAttribute(k, attrs[k]);
    g.appendChild(el);
  }
  BARS.forEach(function (b, i) {
    var x = 492 + 16 * i;
    add("line", { "class": "wick", x1: x + 0.5, x2: x + 0.5, y1: py(b[0]), y2: py(b[1]) });
    var top = py(b[2]), bot = py(b[3]);
    add("rect", {
      "class": b[4] ? "body-dn" : "body-up",
      x: x - 4.5, y: top + 0.5, width: 10, height: Math.max(bot - top, 0)
    });
  });
})();
```
